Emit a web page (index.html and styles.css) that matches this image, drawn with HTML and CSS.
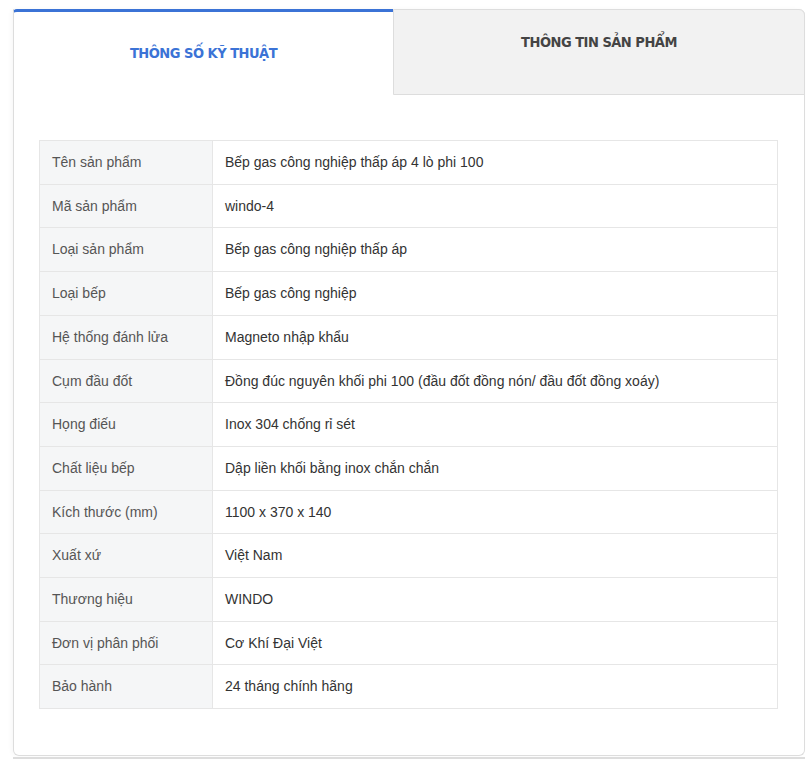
FILE: index.html
```html
<!DOCTYPE html>
<html lang="vi">
<head>
  <meta charset="UTF-8">
  <title>Thông số kỹ thuật</title>
  <link rel="stylesheet" href="styles.css">
</head>
<body>
  <div class="product-tabs">
    <div class="tab-bar">
      <div class="tab active">Thông số kỹ thuật</div>
      <div class="tab">Thông tin sản phẩm</div>
    </div>

    <div class="tab-content">
      <table class="spec-table">
        <tr><td>Tên sản phẩm</td><td>Bếp gas công nghiệp thấp áp 4 lò phi 100</td></tr>
        <tr><td>Mã sản phẩm</td><td>windo-4</td></tr>
        <tr><td>Loại sản phẩm</td><td>Bếp gas công nghiệp thấp áp</td></tr>
        <tr><td>Loại bếp</td><td>Bếp gas công nghiệp</td></tr>
        <tr><td>Hệ thống đánh lửa</td><td>Magneto nhập khẩu</td></tr>
        <tr><td>Cụm đầu đốt</td><td>Đồng đúc nguyên khối phi 100 (đầu đốt đồng nón/ đầu đốt đồng xoáy)</td></tr>
        <tr><td>Họng điếu</td><td>Inox 304 chống rỉ sét</td></tr>
        <tr><td>Chất liệu bếp</td><td>Dập liền khối bằng inox chắn chắn</td></tr>
        <tr><td>Kích thước (mm)</td><td>1100 x 370 x 140</td></tr>
        <tr><td>Xuất xứ</td><td>Việt Nam</td></tr>
        <tr><td>Thương hiệu</td><td>WINDO</td></tr>
        <tr><td>Đơn vị phân phối</td><td>Cơ Khí Đại Việt</td></tr>
        <tr><td>Bảo hành</td><td>24 tháng chính hãng</td></tr>
      </table>
    </div>
  </div>
  <div class="next-block"></div>
</body>
</html>
```

FILE: styles.css
```css
* {
  box-sizing: border-box;
}

body {
  margin: 0;
  padding: 9px 5px 0 13px;
  background-color: #fff;
  font-family: 'Liberation Sans', Arial, sans-serif;
  color: #333;
}

.product-tabs {
  width: 792px;
  border: 1px solid #ddd;
  border-top: none;
  border-radius: 0 6px 6px 6px;
  box-shadow: -2px 0 4px rgba(0, 0, 0, 0.03);
}

.tab-bar {
  display: flex;
  align-items: flex-start;
}

.tab {
  font-family: 'DejaVu Sans Condensed', 'DejaVu Sans', sans-serif;
  font-weight: bold;
  font-size: 14.5px;
  text-transform: uppercase;
  text-align: center;
  letter-spacing: -0.5px;
}

.tab.active {
  width: 380px;
  margin-left: -1px;
  height: 86px;
  padding-top: 33px;
  color: #3b73d6;
  border-top: 3px solid #3b73d6;
  border-left: 1px solid #ddd;
  border-radius: 4px 0 0 0;
}

.tab:not(.active) {
  flex: 1;
  height: 86px;
  margin-right: -1px;
  padding-top: 24px;
  color: #444;
  background-color: #f2f2f2;
  border: 1px solid #ddd;
  border-radius: 0 6px 0 0;
}

.tab-content {
  padding: 45px 26px 46px 25px;
}

.spec-table {
  width: 100%;
  border-collapse: collapse;
  font-size: 14px;
}

.spec-table td {
  border: 1px solid #e6e6e6;
  padding: 11px 12px;
  line-height: 20.7px;
  vertical-align: middle;
}

.spec-table td:first-child {
  width: 173px;
  background-color: #f5f6f7;
  color: #555;
}

.next-block {
  height: 10px;
  margin-top: 1px;
  border-top: 2px solid #ddd;
  background-color: #f7f7f7;
}
```
